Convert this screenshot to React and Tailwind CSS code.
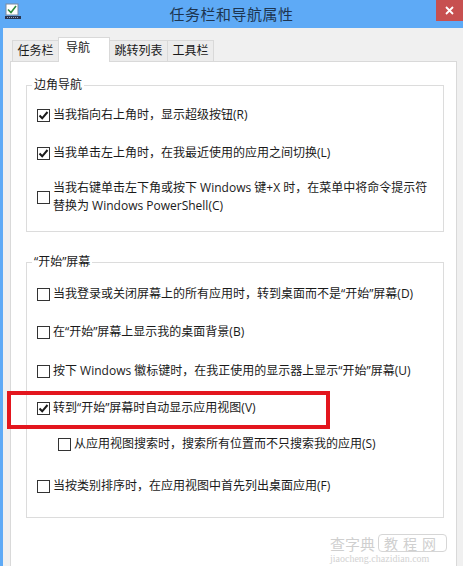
import React from "react";

const font = "font-['Segoe_UI','Open_Sans','Noto_Sans_CJK_SC',sans-serif]";

function Box({ checked }) {
    return (
        <span className="w-[13px] h-[13px] shrink-0 border border-[#333] bg-white flex items-center justify-center">
            {checked && (
                <svg width="11" height="11" viewBox="0 0 11 11">
                    <path d="M1.5 5.5 L4.2 8.3 L9.5 2" fill="none" stroke="#1a1a1a" strokeWidth="2" />
                </svg>
            )}
        </span>
    );
}

function Row({ checked, children, className = "" }) {
    return (
        <div className={"flex items-center gap-[3px] text-[12px] leading-[18px] text-[#1a1a1a] " + className}>
            <Box checked={checked} />
            <span>{children}</span>
        </div>
    );
}

function Group({ title, children, className = "" }) {
    return (
        <div className={"relative border border-[#dcdcdc] ml-[15px] mr-[12px] pl-[10px] " + className}>
            <span className="absolute -top-[10px] left-[5px] bg-white px-[2px] text-[12px] leading-[18px] text-[#1a1a1a]">
                {title}
            </span>
            {children}
        </div>
    );
}

export default function App() {
    return (
        <div className={"relative w-[463px] h-[566px] overflow-hidden bg-[#5eaaf6] " + font}>
            {/* title bar */}
            <div className="relative h-[28px] flex items-center justify-center">
                <svg className="absolute left-[5px] top-[3px]" width="16" height="16" viewBox="0 0 16 16">
                    <rect x="1" y="1" width="12" height="11" fill="#fff" stroke="#7a8aa0" />
                    <path d="M3 6.5 L6 9.5 L11 3" fill="none" stroke="#2c8a3c" strokeWidth="1.6" />
                    <rect x="0" y="13" width="16" height="3" fill="#2a3550" />
                    <path d="M2 14.5 H14" stroke="#9aa8c0" strokeDasharray="1 1" />
                </svg>
                <span className="text-[15px] text-[#1d3550] tracking-[0.5px]">任务栏和导航属性</span>
                <div className="absolute right-0 top-0 w-[27px] h-[21px] bg-[#c75050] flex items-center justify-center">
                    <svg width="9" height="9" viewBox="0 0 9 9">
                        <path d="M1 1 L8 8 M8 1 L1 8" stroke="#fff" strokeWidth="1.8" />
                    </svg>
                </div>
            </div>

            {/* body */}
            <div className="ml-[3px] h-[538px] bg-[#f0f0f0] pl-[7px] pt-[9px]">
                <div className="flex items-end h-[24px] pl-[2px] text-[12px] text-[#1a1a1a]">
                    <div className="h-[21px] w-[47px] border border-b-0 border-[#d9d9d9] bg-[#ececec] flex items-center justify-center">任务栏</div>
                    <div className="relative z-10 -ml-[1px] h-[25px] -mb-[1px] w-[52px] border border-b-0 border-[#d9d9d9] bg-white flex items-start justify-start pl-[7px] pt-[1px]">导航</div>
                    <div className="-ml-[1px] h-[21px] w-[59px] border border-b-0 border-[#d9d9d9] bg-[#ececec] flex items-center justify-center">跳转列表</div>
                    <div className="-ml-[1px] h-[21px] w-[47px] border border-b-0 border-[#d9d9d9] bg-[#ececec] flex items-center justify-center">工具栏</div>
                </div>

                <div className="w-[447px] h-[520px] bg-white border border-[#d9d9d9] pt-[23px]">
                    <Group title="边角导航" className="pt-[20px] pb-[16px]">
                        <Row checked>当我指向右上角时，显示超级按钮(R)</Row>
                        <Row checked className="mt-[20px]">当我单击左上角时，在我最近使用的应用之间切换(L)</Row>
                        <Row className="mt-[17px]">
                            当我右键单击左下角或按下 Windows 键+X 时，在菜单中将命令提示符
                            <br />
                            替换为 Windows PowerShell(C)
                        </Row>
                    </Group>

                    <Group title="“开始”屏幕" className="mt-[30px] pt-[22px] pb-[22px]">
                        <Row>当我登录或关闭屏幕上的所有应用时，转到桌面而不是“开始”屏幕(D)</Row>
                        <Row className="mt-[20px]">在“开始”屏幕上显示我的桌面背景(B)</Row>
                        <Row className="mt-[21px]">按下 Windows 徽标键时，在我正使用的显示器上显示“开始”屏幕(U)</Row>
                        <Row checked className="mt-[19px]">转到“开始”屏幕时自动显示应用视图(V)</Row>
                        <Row className="mt-[18px] ml-[21px]">从应用视图搜索时，搜索所有位置而不只搜索我的应用(S)</Row>
                        <Row className="mt-[24px]">当按类别排序时，在应用视图中首先列出桌面应用(F)</Row>
                    </Group>
                </div>
            </div>

            {/* red annotation */}
            <div className="absolute left-[7px] top-[391px] w-[323px] h-[38px] border-[4px] border-[#e3161e]" />

            {/* watermark */}
            <div className="absolute left-[330px] top-[534px] w-[124px] text-[#cfcfcf] leading-none whitespace-nowrap font-['Noto_Sans_CJK_SC',sans-serif]">
                <div className="flex items-center gap-[3px] text-[15px]">
                    <span>查字典</span>
                    <span className="border border-[#d6d6d6] rounded-[4px] px-[5px] py-[1px] tracking-[5px] text-[14px]">教程网</span>
                </div>
                <div className="mt-[2px] text-[10px] leading-[10px] font-['Liberation_Serif',serif] text-[#d2d2d2]">jiaocheng.chazidian.com</div>
            </div>
        </div>
    );
}
